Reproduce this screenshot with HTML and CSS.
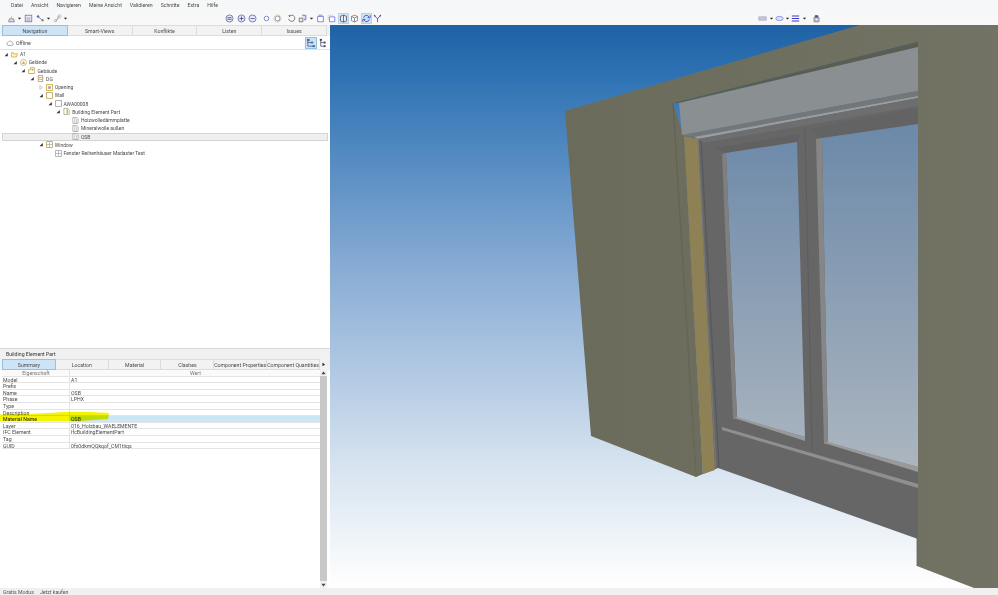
FILE: index.html
```html
<!DOCTYPE html>
<html lang="de">
<head>
<meta charset="utf-8">
<title>BIM Viewer</title>
<link rel="stylesheet" href="styles.css">
</head>
<body>
<svg class="defs" width="0" height="0" aria-hidden="true">
  <symbol id="i-folder" viewBox="0 0 8 8"><path d="M.5 2V6.8H6.2L7.5 3.2H2.8L2.2 1.5H1Z" fill="#fff3c4" stroke="#c9a227" stroke-width=".8"/></symbol>
  <symbol id="i-site" viewBox="0 0 8 8"><circle cx="4" cy="4" r="3.4" fill="#fff" stroke="#b9a05a" stroke-width=".8"/><path d="M4 1.9 6 5.6H2Z" fill="#e0b020"/></symbol>
  <symbol id="i-building" viewBox="0 0 8 8"><path d="M.7 7.4V3H3V.7H7.2V7.4Z" fill="#fff" stroke="#c9a227" stroke-width=".9"/><path d="M4.2 2.2H6V4H4.2Z" fill="#999"/></symbol>
  <symbol id="i-storey" viewBox="0 0 8 8"><path d="M1.5.6H6.5V7.4H1.5Z" fill="#fff" stroke="#a08a50" stroke-width=".8"/><path d="M1.5 3H6.5M1.5 5H6.5" stroke="#d0a830" stroke-width=".9"/></symbol>
  <symbol id="i-opening" viewBox="0 0 8 8"><path d="M.6.6H7.4V7.4H.6Z" fill="#fff" stroke="#c9a227" stroke-width=".9"/><path d="M2.5 2.5H5.5V5.5H2.5Z" fill="#a0a0a0"/></symbol>
  <symbol id="i-wall" viewBox="0 0 8 8"><path d="M.6.6H7.4V7.4H.6Z" fill="#fff" stroke="#b89a50" stroke-width=".9"/></symbol>
  <symbol id="i-elem" viewBox="0 0 8 8"><path d="M.6.6H7.4V7.4H.6Z" fill="#fff" stroke="#999" stroke-width=".9"/></symbol>
  <symbol id="i-part" viewBox="0 0 8 8"><path d="M1 .6H5.5L7 2V7.4H1Z" fill="#fff" stroke="#999" stroke-width=".8"/><path d="M4 1.5H5.6V6.6H4Z" fill="#e0b020"/></symbol>
  <symbol id="i-doc" viewBox="0 0 8 8"><path d="M1 .6H5.5L7 2V7.4H1Z" fill="#fff" stroke="#999" stroke-width=".8"/><path d="M3.2 1V7M5 2V7" stroke="#aaa" stroke-width=".7"/></symbol>
  <symbol id="i-win" viewBox="0 0 8 8"><path d="M.6.6H7.4V7.4H.6Z" fill="#fff" stroke="#b89a50" stroke-width=".9"/><path d="M4 1V7M1 4H7" stroke="#999" stroke-width=".7"/></symbol>
  <symbol id="i-wintype" viewBox="0 0 8 8"><path d="M.6.6H7.4V7.4H.6Z" fill="#fff" stroke="#999" stroke-width=".8"/><path d="M4 1V7M1 4H7" stroke="#999" stroke-width=".7"/></symbol>
  <symbol id="i-caret" viewBox="0 0 5 5"><path d="M.8 1.700H4.200L2.500 3.500Z" fill="#222"/></symbol>
  <symbol id="i-open" viewBox="0 0 5 5"><path d="M4.3 1V4.3H1Z" fill="#333"/></symbol>
  <symbol id="i-closed" viewBox="0 0 5 5"><path d="M1.4.6 3.9 2.5 1.4 4.4Z" fill="#fff" stroke="#aaa" stroke-width=".6"/></symbol>
</svg>

<div class="app">
  <nav class="menu">
    <span>Datei</span><span>Ansicht</span><span>Navigieren</span><span>Meine Ansicht</span><span>Validieren</span><span>Schnitte</span><span>Extra</span><span>Hilfe</span>
  </nav>

  <div class="toolbar">
    <div class="tgroup g-left">
      <svg class="tb" viewBox="0 0 11 11"><path d="M2 9.500H9L8 6H3Z" fill="#dfe6fa" stroke="#5a62c8" stroke-width=".9"/><path d="M4 6 5.500 2 7 6Z" fill="#e2b93c"/></svg>
      <svg class="car" viewBox="0 0 5 5"><use href="#i-caret"/></svg>
      <svg class="tb gap" viewBox="0 0 11 11"><rect x="1.500" y="1.500" width="8" height="8" fill="#eef" stroke="#6a72c0"/><path d="M3 5H8M3 7.500H8" stroke="#8a8a8a"/></svg>
      <svg class="tb" viewBox="0 0 11 11"><circle cx="2.500" cy="3" r="1.500" fill="#5a62c8"/><circle cx="8" cy="7.500" r="1.500" fill="#8a8a8a"/><path d="M3.500 4 7 7" stroke="#777"/></svg>
      <svg class="car" viewBox="0 0 5 5"><use href="#i-caret"/></svg>
      <svg class="tb gap" viewBox="0 0 11 11"><path d="M3 9.500 8 2" stroke="#aaa" stroke-width="1.400"/><circle cx="8" cy="3" r="2" fill="none" stroke="#bbb"/><circle cx="3" cy="8" r="1.500" fill="none" stroke="#bbb"/></svg>
      <svg class="car" viewBox="0 0 5 5"><use href="#i-caret"/></svg>
    </div>

    <div class="tgroup g-mid">
      <svg class="tb" viewBox="0 0 11 11"><circle cx="5.500" cy="5.500" r="4.300" fill="#e8eafc" stroke="#6a6a9a"/><path d="M3 4.500H8M3 6.500H8" stroke="#444a9a"/></svg>
      <svg class="tb" viewBox="0 0 11 11"><circle cx="5.500" cy="5.500" r="4.300" fill="#e8eafc" stroke="#6a6a9a"/><path d="M3 5.500H8M5.500 3V8" stroke="#444a9a"/></svg>
      <svg class="tb" viewBox="0 0 11 11"><circle cx="5.500" cy="5.500" r="4.300" fill="#e8eafc" stroke="#6a6a9a"/><path d="M3 5.500H8" stroke="#444a9a"/></svg>
      <svg class="tb sep" viewBox="0 0 11 11"><circle cx="5.500" cy="5.500" r="2.800" fill="#fff" stroke="#8088d8" stroke-width="1.200"/></svg>
      <svg class="tb" viewBox="0 0 11 11"><circle cx="5.500" cy="5.500" r="3" fill="#fff" stroke="#9a9ab0" stroke-width="1.300"/><circle cx="5.500" cy="5.500" r="4.500" fill="none" stroke="#c0b070" stroke-dasharray="1 1.300"/></svg>
      <svg class="tb sep" viewBox="0 0 11 11"><path d="M3 2.500A3.800 3.800 0 1 1 2 6" fill="none" stroke="#555" stroke-width=".9"/><path d="M1.500 1.500 4 1.500 3.500 4Z" fill="#555"/></svg>
      <svg class="tb" viewBox="0 0 11 11"><path d="M1.500 5H6V9.500H1.500Z" fill="#eee" stroke="#666"/><path d="M5 1.500H9.500V7H7" fill="#dfe3fa" stroke="#5a62c8"/></svg>
      <svg class="car" viewBox="0 0 5 5"><use href="#i-caret"/></svg>
      <svg class="tb sep2" viewBox="0 0 11 11"><path d="M2 3H9V9.500H2Z" fill="#fff" stroke="#6a72e0"/><path d="M3 1.500H8" stroke="#6a72e0"/></svg>
      <svg class="tb" viewBox="0 0 11 11"><path d="M3 3.500H9.500V9.500H3Z" fill="#fff" stroke="#6a72e0"/><path d="M1.500 7V1.500H7" fill="none" stroke="#aaa" stroke-dasharray="1 1"/></svg>
      <svg class="tb on" viewBox="0 0 11 11"><path d="M1.800 2.800 5.500 1.500 9.200 2.800V8.500L5.500 9.800 1.800 8.500Z" fill="#e8eefc" stroke="#555"/><path d="M5.500 1.500V9.800" stroke="#555"/></svg>
      <svg class="tb" viewBox="0 0 11 11"><path d="M1.800 3 5.500 1.500 9.200 3V8L5.500 9.800 1.800 8Z" fill="#fff" stroke="#777"/><path d="M1.800 3 5.500 4.800 9.200 3M5.500 4.800V9.800" fill="none" stroke="#777"/></svg>
      <svg class="tb on" viewBox="0 0 11 11"><path d="M2 4.500A3.500 3.500 0 0 1 8.500 3.500L7 4.500H10V1.500" fill="none" stroke="#4a52c0" stroke-width="1.100"/><path d="M9 6.500A3.500 3.500 0 0 1 2.500 7.500L4 6.500H1V9.500" fill="none" stroke="#4a52c0" stroke-width="1.100"/></svg>
      <svg class="tb" viewBox="0 0 11 11"><path d="M2 2 5.500 6 9 2M5.500 6V10" fill="none" stroke="#5a6aa0" stroke-width="1.200"/><circle cx="2" cy="2" r="1" fill="#4a52c0"/><circle cx="9" cy="2" r="1" fill="#4a52c0"/></svg>
    </div>

    <div class="tgroup g-right">
      <svg class="tb" viewBox="0 0 11 11"><rect x="1" y="3.500" width="9" height="4" fill="#c6c8e0" stroke="#9a9ab8" stroke-width=".7"/></svg>
      <svg class="car" viewBox="0 0 5 5"><use href="#i-caret"/></svg>
      <svg class="tb" viewBox="0 0 11 11"><ellipse cx="5.500" cy="5.500" rx="4.500" ry="2.500" fill="#dfe3fc" stroke="#7a82e8"/></svg>
      <svg class="car" viewBox="0 0 5 5"><use href="#i-caret"/></svg>
      <svg class="tb" viewBox="0 0 11 11"><path d="M1 2.500H10M1 5.500H10M1 8.500H10" stroke="#3c3cc8" stroke-width="1.300"/></svg>
      <svg class="car" viewBox="0 0 5 5"><use href="#i-caret"/></svg>
      <svg class="tb print" viewBox="0 0 11 11"><path d="M2.500 4H8.500V9.500H2.500Z" fill="#ddd" stroke="#777"/><path d="M3.500 1.500H7.500V4H3.500Z" fill="#3c4ca8"/><circle cx="5.500" cy="6.800" r="1.500" fill="#fff" stroke="#888" stroke-width=".7"/></svg>
    </div>
  </div>

  <main class="main">
    <section class="left">
      <div class="tabs nav-tabs">
        <div class="tab on">Navigation</div><div class="tab">Smart-Views</div><div class="tab">Konflikte</div><div class="tab">Listen</div><div class="tab">Issues</div>
      </div>
      <div class="offline">
        <svg class="cloud" viewBox="0 0 8 6"><path d="M2 5.400H6.200A1.400 1.400 0 0 0 6.300 2.700 2.200 2.200 0 0 0 2.200 2.300 1.600 1.600 0 0 0 2 5.400Z" fill="#fff" stroke="#777" stroke-width=".6"/></svg>
        <span class="off-text">Offline</span>
        <svg class="tb2 on" viewBox="0 0 11 11"><path d="M2 2V9H9M2 5H5" fill="none" stroke="#4a6aa0"/><rect x="1" y="1" width="3" height="2.400" fill="#4a6aa0"/><rect x="5" y="4" width="3" height="2" fill="#4a6aa0"/><rect x="7" y="8" width="3" height="2" fill="#4a6aa0"/></svg>
        <svg class="tb2" viewBox="0 0 11 11"><path d="M3 2V9M3 5H6M3 9H6" fill="none" stroke="#667"/><rect x="2" y="1" width="2.400" height="2" fill="#445"/><rect x="6" y="4" width="2.400" height="2" fill="#445"/><rect x="6" y="8" width="2.400" height="2" fill="#445"/></svg>
      </div>

      <div class="tree">
        <div class="row d0"><svg class="arr" viewBox="0 0 5 5"><use href="#i-open"/></svg><svg class="ico" viewBox="0 0 8 8"><use href="#i-folder"/></svg><span>A1</span></div>
        <div class="row d1"><svg class="arr" viewBox="0 0 5 5"><use href="#i-open"/></svg><svg class="ico" viewBox="0 0 8 8"><use href="#i-site"/></svg><span>Gelände</span></div>
        <div class="row d2"><svg class="arr" viewBox="0 0 5 5"><use href="#i-open"/></svg><svg class="ico" viewBox="0 0 8 8"><use href="#i-building"/></svg><span>Gebäude</span></div>
        <div class="row d3"><svg class="arr" viewBox="0 0 5 5"><use href="#i-open"/></svg><svg class="ico" viewBox="0 0 8 8"><use href="#i-storey"/></svg><span>DG</span></div>
        <div class="row d4"><svg class="arr" viewBox="0 0 5 5"><use href="#i-closed"/></svg><svg class="ico" viewBox="0 0 8 8"><use href="#i-opening"/></svg><span>Opening</span></div>
        <div class="row d4"><svg class="arr" viewBox="0 0 5 5"><use href="#i-open"/></svg><svg class="ico" viewBox="0 0 8 8"><use href="#i-wall"/></svg><span>Wall</span></div>
        <div class="row d5"><svg class="arr" viewBox="0 0 5 5"><use href="#i-open"/></svg><svg class="ico" viewBox="0 0 8 8"><use href="#i-elem"/></svg><span>AWA00008</span></div>
        <div class="row d6"><svg class="arr" viewBox="0 0 5 5"><use href="#i-open"/></svg><svg class="ico" viewBox="0 0 8 8"><use href="#i-part"/></svg><span>Building Element Part</span></div>
        <div class="row d7"><i class="arr"></i><svg class="ico" viewBox="0 0 8 8"><use href="#i-doc"/></svg><span>Holzwolledämmplatte</span></div>
        <div class="row d7"><i class="arr"></i><svg class="ico" viewBox="0 0 8 8"><use href="#i-doc"/></svg><span>Mineralwolle außen</span></div>
        <div class="row d7 sel"><i class="arr"></i><svg class="ico" viewBox="0 0 8 8"><use href="#i-doc"/></svg><span>OSB</span></div>
        <div class="row d4"><svg class="arr" viewBox="0 0 5 5"><use href="#i-open"/></svg><svg class="ico" viewBox="0 0 8 8"><use href="#i-win"/></svg><span>Window</span></div>
        <div class="row d5"><i class="arr"></i><svg class="ico" viewBox="0 0 8 8"><use href="#i-wintype"/></svg><span>Fenster Reihenhäuser Madaster Test</span></div>
      </div>

      <section class="props">
        <div class="props-title">Building Element Part</div>
        <div class="tabs prop-tabs">
          <div class="tab on">Summary</div><div class="tab">Location</div><div class="tab">Material</div><div class="tab">Clashes</div><div class="tab">Component Properties</div><div class="tab">Component Quantities</div>
          <div class="tab-next"><svg viewBox="0 0 5 5"><path d="M1.500.8 4 2.500 1.500 4.200Z" fill="#222"/></svg></div>
        </div>
        <div class="grid-wrap">
          <div class="grid">
            <div class="grow head"><div class="k">Eigenschaft</div><div class="v">Wert</div></div>
            <div class="grow"><div class="k">Model</div><div class="v">A1</div></div>
            <div class="grow"><div class="k">Prefix</div><div class="v"></div></div>
            <div class="grow"><div class="k">Name</div><div class="v">OSB</div></div>
            <div class="grow"><div class="k">Phase</div><div class="v">LPHX</div></div>
            <div class="grow"><div class="k">Type</div><div class="v"></div></div>
            <div class="grow"><div class="k">Description</div><div class="v"></div></div>
            <div class="grow active"><div class="k">Material Name</div><div class="v">OSB</div></div>
            <div class="grow"><div class="k">Layer</div><div class="v">016_Holzbau_WAELEMENTE</div></div>
            <div class="grow"><div class="k">IFC Element</div><div class="v">IfcBuildingElementPart</div></div>
            <div class="grow"><div class="k">Tag</div><div class="v"></div></div>
            <div class="grow"><div class="k">GUID</div><div class="v">0fx0dkmQQkqof_CM1tiiqs</div></div>
            <svg class="marker" viewBox="0 0 110 9" preserveAspectRatio="none"><path d="M0 2.500 30 2 66 0 90 0 109 1 108 7 80 9 0 9Z" fill="#f4f400"/></svg>
          </div>
          <div class="scroll">
            <svg class="sarr" viewBox="0 0 5 5"><path d="M.8 3.500H4.200L2.500 1.200Z" fill="#444"/></svg>
            <div class="thumb"></div>
            <svg class="sarr" viewBox="0 0 5 5"><path d="M.8 1.500H4.200L2.500 3.800Z" fill="#444"/></svg>
          </div>
        </div>
      </section>
    </section>

    <div class="viewport">
      <svg class="scene" viewBox="330 25 668 563" preserveAspectRatio="none">
        <defs>
          <linearGradient id="sky" gradientUnits="userSpaceOnUse" x1="0" y1="25" x2="0" y2="588">
            <stop offset="0" stop-color="#1f62a5"/>
            <stop offset=".1" stop-color="#3174b5"/>
            <stop offset=".42" stop-color="#85aad3"/>
            <stop offset=".78" stop-color="#d6e3f0"/>
            <stop offset="1" stop-color="#ffffff"/>
          </linearGradient>
          <linearGradient id="glass" gradientUnits="userSpaceOnUse" x1="0" y1="125" x2="0" y2="470">
            <stop offset="0" stop-color="#6c89a9"/>
            <stop offset="1" stop-color="#acb6c0"/>
          </linearGradient>
          <linearGradient id="wallg" gradientUnits="userSpaceOnUse" x1="565" y1="0" x2="998" y2="0">
            <stop offset="0" stop-color="#6b6b5b"/>
            <stop offset="1" stop-color="#737365"/>
          </linearGradient>
        </defs>
        <rect x="330" y="25" width="668" height="563" fill="url(#sky)"/>
        <!-- wall, with the opening cut out -->
        <path d="M565 111 860 25H998V588H974L917 566V42L673 103 696 477 591 436Z" fill="url(#wallg)"/>
        <path d="M917 42V566" stroke="#666658" stroke-width=".8" fill="none"/>
        <!-- jamb strip and frame -->
        <path d="M673 103 684 136 703 474 696 477Z" fill="#6d6d5d"/>
        <path d="M698 137 918 90V539L718 468 703 474 684 136Z" fill="#666"/>
        <!-- osb -->
        <path d="M684 136 698 139 715 470 703 474Z" fill="#8d8155"/>
        <path d="M673 103 696 477" stroke="#5c5c4e" stroke-width=".8" fill="none"/>
        <path d="M698 139 716 469" stroke="#76797c" stroke-width="1" fill="none"/>
        <path d="M701 139 719 468" stroke="#55585c" stroke-width="1.200" fill="none"/>
        <!-- head of the opening and shutter box -->
        <path d="M673 103 918 42V47L679 103Z" fill="#5d5d4f"/>
        <path d="M679 103 918 47V91L682 135Z" fill="#8a9092"/>
        <path d="M682 135 918 91V96L694 137Z" fill="#74777a"/>
        <path d="M694 137 918 96V98L698 139Z" fill="#989da0"/>
        <path d="M698 139 918 98V106L704 143Z" fill="#6c6e70"/>
        <!-- sash shading -->
        <path d="M704 143 805 126 810 137 726 153 737 418 723 428Z" fill="#666"/>
        <path d="M716 148 800 134 797 142 726 153Z" fill="#616161"/>
        <path d="M810 129 918 108V124L822 138Z" fill="#636363"/>
        <!-- glass -->
        <path d="M726 153 797 142 805 437 737 418Z" fill="url(#glass)"/>
        <path d="M822 138 918 124V467L828 443Z" fill="url(#glass)"/>
        <!-- inner bevels -->
        <path d="M722 154 726 153 737 418 733 419Z" fill="#7f7f7f"/>
        <path d="M816 139 822 138 828 443 824 444Z" fill="#868686"/>
        <path d="M734 418 737 417 805 437V441Z" fill="#999"/>
        <path d="M824 443 828 442 918 467V472Z" fill="#999"/>
        <path d="M805 128 812 450" stroke="#5a5a5a" stroke-width=".8" fill="none"/>
        <path d="M722 427 918 484V488L722 430Z" fill="#8f8f8f"/>
      </svg>
    </div>
  </main>

  <footer class="status"><span>Gratis Modus</span><span>Jetzt kaufen</span></footer>
</div>
</body>
</html>
```

FILE: styles.css
```css
* { box-sizing: border-box; }
html, body { margin: 0; height: 100%; overflow: hidden; }
body { font-family: Roboto, "Open Sans", sans-serif; font-size: 5.2px; color: #4a4a4a; background: #f5f5f5; }
.defs { position: absolute; }
svg { display: block; flex: none; }

.app { width: 998px; height: 595px; display: flex; flex-direction: column; }

.menu { height: 10px; flex: none; display: flex; align-items: center; gap: 8px; padding-left: 11px; background: #f6f7f8; white-space: nowrap; }

.toolbar { height: 15px; flex: none; display: grid; grid-template-columns: 224px 533px 1fr; padding-top: 2px; background: #f8f8f9; }
.tgroup { display: flex; align-items: center; }
.g-left { padding-left: 5.25px; }
.tb { width: 9px; height: 9px; margin: 0 1.25px; }
.car { width: 5px; height: 5px; }
.gap { margin-left: 2.25px; }
.sep { margin-left: 3.25px; }
.sep2 { margin-left: 2.25px; }
.tb.on { background: #cde4f7; box-shadow: 0 0 0 1px #b4d4ef; }
.tb2.on { background: #cde4f7; box-shadow: inset 0 0 0 1px #93bfe3; }
.print { margin-left: 5.25px; }

.main { flex: 1; display: flex; min-height: 0; }
.left { width: 330px; flex: none; display: flex; flex-direction: column; background: #fff; }
.viewport { flex: 1; min-width: 0; }
.scene { width: 100%; height: 100%; }

.tabs { display: flex; flex: none; background: #f1f1f1; }
.nav-tabs { height: 11px; padding: 0 3px 0 2px; }
.prop-tabs { height: 11px; padding-left: 2px; padding-right: 3px; }
.tab { flex: 1 1 0; min-width: 0; display: flex; align-items: center; justify-content: center; white-space: nowrap; border: 1px solid #dcdcdc; border-left-width: 0; background: #f2f2f2; }
.tab.on { background: #cde4f7; border: 1px solid #95c0e4; }
.tab-next { width: 7px; flex: none; display: flex; align-items: center; justify-content: center; background: #f2f2f2; }
.tab-next svg { width: 5px; height: 5px; }

.offline { height: 14px; flex: none; display: flex; align-items: center; padding: 0 1px 0 6px; border-bottom: 1px solid #e2e2e2; }
.cloud { width: 8px; height: 6px; margin-right: 2px; }
.off-text { flex: 1; }
.tb2 { width: 12px; height: 12px; padding: 1px; }

.tree { flex: 1; min-height: 0; font-size: 5px; }
.row { height: 8.25px; margin: 0 2px; display: flex; align-items: center; white-space: nowrap; }
.arr { width: 8px; height: 5px; display: block; flex: none; }
.ico { width: 7px; height: 7px; margin: 0 2px 0 1px; }
.sel { background: #efefef; box-shadow: inset 0 0 0 1px #d4d4d4; }
.d1 { padding-left: 8.7px; }
.d2 { padding-left: 17.4px; }
.d3 { padding-left: 26.1px; }
.d4 { padding-left: 34.8px; }
.d5 { padding-left: 43.5px; }
.d6 { padding-left: 52.2px; }
.d7 { padding-left: 60.9px; }

.props { height: 240px; flex: none; display: flex; flex-direction: column; }
.props-title { height: 11px; flex: none; display: flex; align-items: center; padding-left: 6px; background: #f1f1f1; border-top: 1px solid #d8d8d8; color: #333; }
.grid-wrap { flex: 1; display: flex; padding: 0 3px 0 2px; min-height: 0; background: #fff; }
.grid { flex: 1; min-width: 0; position: relative; }
.grow { height: 6.6px; display: flex; align-items: center; line-height: 6.6px; border-bottom: 1px solid #e4e4e4; white-space: nowrap; }
.k { width: 68px; padding-left: 1px; flex: none; height: 100%; border-right: 1px solid #e4e4e4; }
.v { flex: 1; padding-left: 1px; height: 100%; }
.head { color: #777; background: #fafafa; }
.head .k, .head .v { text-align: center; }
.active .v { background: #cbe6f5; color: #222; }
.active .k { color: #222; }
.marker { position: absolute; left: -2px; top: 42px; width: 110px; height: 9px; mix-blend-mode: multiply; }
.scroll { width: 7px; flex: none; display: flex; flex-direction: column; background: #f1f1f1; }
.sarr { width: 7px; height: 6px; }
.thumb { flex: 1; background: #c8c8c8; margin-bottom: 1px; }

.status { height: 7px; flex: none; display: flex; align-items: center; gap: 6px; padding-left: 3px; background: #f0f0f0; color: #555; white-space: nowrap; }
```
